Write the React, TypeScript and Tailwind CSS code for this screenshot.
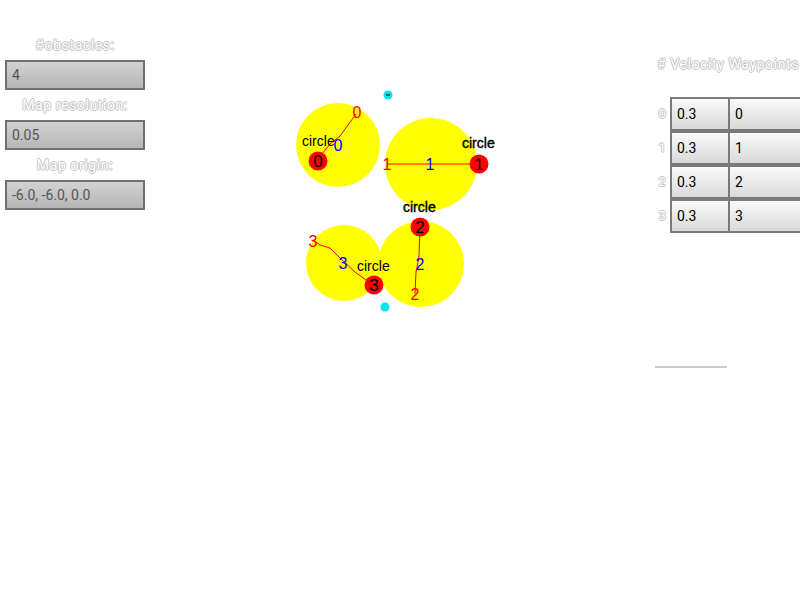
import React from "react";

const emboss =
  "text-white tracking-[0.6px] [text-shadow:-1px_0_0_#c4c4c4,1px_0_0_#c4c4c4,0_-1px_0_#c4c4c4,0_1px_0_#c4c4c4]";

function Field({ label, value }: { label: string; value: string }) {
  return (
    <div className="flex flex-col items-center">
      <div className={`h-[20px] leading-[20px] text-[14px] ${emboss}`}>{label}</div>
      <div className="mt-[5px] mb-[5px] w-[140px] h-[30px] border-2 border-[#707070] bg-gradient-to-b from-[#d2d2d2] to-[#b6b6b6] px-[5px] flex items-center text-[14px] text-[#555]">
        {value}
      </div>
    </div>
  );
}

function Canvas() {
  const f = "'Liberation Sans', Arial, sans-serif";
  return (
    <svg width={505} height={600} viewBox="150 0 505 600" className="block">
      <g fill="#ffff00">
        <circle cx={338} cy={145} r={42} />
        <circle cx={431} cy={164} r={46} />
        <circle cx={421} cy={264} r={43} />
        <circle cx={344} cy={263} r={38} />
      </g>
      <g fill="none" stroke="#ff0000" strokeWidth={1}>
        <polyline points="322,154 330,144 340,136 351,121 356,114" />
        <polyline points="387,164 479,164" />
        <polyline points="420,228 419,256 418,262 416,272 415,294" />
        <polyline points="313,240 320,245 330,248 340,258 355,272 373,285" />
      </g>
      <g fill="#ff0000">
        <circle cx={318} cy={161} r={9.5} />
        <circle cx={479} cy={164} r={9.5} />
        <circle cx={420} cy={227} r={9.5} />
        <circle cx={374} cy={285} r={9.5} />
      </g>
      <g fontFamily={f} fontSize={17} textAnchor="middle" dominantBaseline="central" fill="#000">
        <text x={318} y={161}>0</text>
        <text x={479} y={164}>1</text>
        <text x={420} y={227}>2</text>
        <text x={374} y={285}>3</text>
      </g>
      <g fontFamily={f} fontSize={16} textAnchor="middle" dominantBaseline="central" fill="#ff0000">
        <text x={357} y={112}>0</text>
        <text x={387} y={164}>1</text>
        <text x={415} y={294}>2</text>
        <text x={313} y={241}>3</text>
      </g>
      <g fontFamily={f} fontSize={16} textAnchor="middle" dominantBaseline="central" fill="#0000ff">
        <text x={338} y={145}>0</text>
        <text x={430} y={164}>1</text>
        <text x={420} y={264}>2</text>
        <text x={343} y={263}>3</text>
      </g>
      <g fontFamily={f} fontSize={14} dominantBaseline="central" fill="#000">
        <text x={302} y={141}>circle</text>
        <text x={462} y={143} stroke="#000" strokeWidth={0.4}>circle</text>
        <text x={403} y={207} stroke="#000" strokeWidth={0.4}>circle</text>
        <text x={357} y={266}>circle</text>
      </g>
      <circle cx={388} cy={95} r={4.5} fill="#00e5ee" />
      <line x1={386} y1={95} x2={390} y2={95} stroke="#000" strokeWidth={1.2} />
      <circle cx={385} cy={307} r={4.5} fill="#00e5ee" />
    </svg>
  );
}

export default function App() {
  const rows = [
    ["0.3", "0"],
    ["0.3", "1"],
    ["0.3", "2"],
    ["0.3", "3"],
  ];
  return (
    <div className="w-[800px] h-[600px] bg-white flex overflow-hidden font-['Roboto',sans-serif]">
      <div className="w-[150px] shrink-0 pt-[35px]">
        <Field label="#obstacles:" value="4" />
        <Field label="Map resolution:" value="0.05" />
        <Field label="Map origin:" value="-6.0, -6.0, 0.0" />
      </div>
      <div className="w-[505px] shrink-0">
        <Canvas />
      </div>
      <div className="w-[145px] shrink-0 overflow-hidden">
        <div className={`mt-[54px] ml-[2px] whitespace-nowrap h-[20px] leading-[20px] text-[14px] ${emboss}`}>
          # Velocity Waypoints
        </div>
        <div className="mt-[23px] flex flex-col w-[200px]">
          {rows.map((r, i) => (
            <div key={i} className="flex items-center h-[34px]">
              <div className={`w-[15px] text-center text-[13px] ${emboss}`}>{i}</div>
              <div className="w-[60px] h-full border-2 border-[#7a7a7a] bg-gradient-to-b from-[#fafafa] to-[#d9d9d9] px-[5px] flex items-center text-[14px] text-black">
                {r[0]}
              </div>
              <div className="w-[120px] h-full -ml-[2px] border-2 border-[#7a7a7a] bg-gradient-to-b from-[#fafafa] to-[#d9d9d9] px-[5px] flex items-center text-[14px] text-black">
                {r[1]}
              </div>
            </div>
          ))}
        </div>
        <div className="mt-[133px] w-[72px] h-[2px] bg-[#cccccc]" />
      </div>
    </div>
  );
}
